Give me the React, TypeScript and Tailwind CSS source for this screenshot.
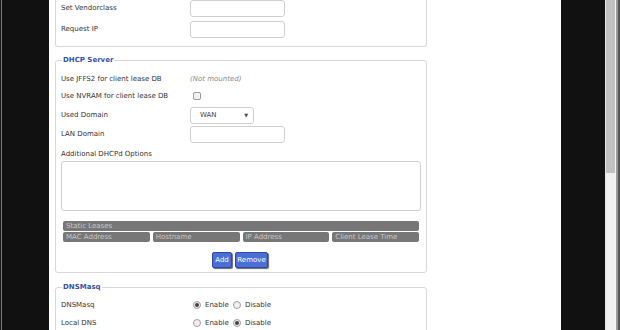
import React from "react";

const font = { fontFamily: '"DejaVu Sans", Verdana, sans-serif' };

function Row({ label, children, h }: { label: string; children?: React.ReactNode; h: string }) {
  return (
    <div className={`flex items-center ${h}`}>
      <div className="w-[129px] shrink-0 text-[#333]">{label}</div>
      <div className="flex items-center">{children}</div>
    </div>
  );
}

function Input() {
  return <div className="h-[17px] w-[95px] rounded-[3px] border border-[#cfcfcf] bg-white" />;
}

function Radio({ on }: { on?: boolean }) {
  return (
    <span className="flex h-[8px] w-[8px] shrink-0 items-center justify-center rounded-full border border-[#a0a0a0] bg-[#f0f0f0]">
      {on && <span className="h-[4px] w-[4px] rounded-full bg-[#444]" />}
    </span>
  );
}

function RadioPair({ first }: { first: boolean }) {
  return (
    <div className="flex items-center pl-[3px] text-[#333]">
      <Radio on={first} />
      <span className="ml-[4px] w-[28px]">Enable</span>
      <Radio on={!first} />
      <span className="ml-[4px]">Disable</span>
    </div>
  );
}

export default function App() {
  return (
    <div className="flex h-[330px] w-[620px] overflow-hidden bg-white text-[7px] leading-none" style={font}>
      <div className="flex h-full w-[49px] shrink-0 bg-[#111]">
        <div className="w-[1px] bg-[#1a1a1a]" />
        <div className="w-[1px] bg-[#7a7a7a]" />
      </div>
      <div className="h-full w-[512px] shrink-0 pl-[6px]">
        {/* first box, top cut off */}
        <div className="w-[372px] rounded-b-[3px] border-x border-b border-[#d8d8d8] px-[5px] pb-[8px]">
          <Row label="Set Vendorclass" h="h-[17px]">
            <Input />
          </Row>
          <div className="h-[4px]" />
          <Row label="Request IP" h="h-[17px]">
            <Input />
          </Row>
        </div>

        <fieldset className="mt-[10px] w-[372px] rounded-[3px] border border-[#d8d8d8] px-[5px] pb-[4px]">
          <legend className="ml-[1px] px-[1px] font-bold text-[#3550a8]">DHCP Server</legend>
          <div className="h-[7px]" />
          <Row label="Use JFFS2 for client lease DB" h="h-[16px]">
            <span className="italic text-[#888]">(Not mounted)</span>
          </Row>
          <Row label="Use NVRAM for client lease DB" h="h-[18px]">
            <span className="ml-[3px] h-[8px] w-[8px] rounded-[2px] border border-[#999] bg-[#f3f3f3]" />
          </Row>
          <div className="h-[2px]" />
          <Row label="Used Domain" h="h-[17px]">
            <div className="flex h-[17px] w-[64px] items-center justify-between rounded-[3px] border border-[#cfcfcf] bg-white pl-[9px] pr-[5px] text-[#444]">
              <span>WAN</span>
              <span className="text-[5px]">▼</span>
            </div>
          </Row>
          <div className="h-[2px]" />
          <Row label="LAN Domain" h="h-[17px]">
            <Input />
          </Row>
          <div className="flex h-[18px] items-center pt-[4px] text-[#333]">Additional DHCPd Options</div>
          <div className="h-[50px] w-[360px] rounded-[3px] border border-[#cfcfcf] bg-white" />
          <div className="ml-[2px] mt-[10px] w-[356px]">
            <div className="flex h-[10px] items-center rounded-[2px] bg-[#777] pl-[3px] text-[#c8c8c8]">Static Leases</div>
            <div className="mt-[1px] grid grid-cols-4 gap-[3px]">
              {["MAC Address", "Hostname", "IP Address", "Client Lease Time"].map((t) => (
                <div key={t} className="flex h-[10px] items-center rounded-[2px] bg-[#777] pl-[3px] text-[#c8c8c8]">
                  {t}
                </div>
              ))}
            </div>
          </div>
          <div className="mt-[10px] flex justify-center gap-[3px] pr-[2px]">
            <div className="flex h-[16px] w-[20px] items-center justify-center rounded-[2px] border border-[#2e4aa8] bg-[#4a6fd6] text-white shadow-[1px_1px_1px_#666]">Add</div>
            <div className="flex h-[16px] w-[33px] items-center justify-center rounded-[2px] border border-[#2e4aa8] bg-[#4a6fd6] text-white shadow-[1px_1px_1px_#666]">Remove</div>
          </div>
        </fieldset>

        <fieldset className="mt-[11px] w-[372px] rounded-[3px] border border-[#d8d8d8] px-[5px] pb-[10px]">
          <legend className="ml-[1px] px-[1px] font-bold text-[#3550a8]">DNSMasq</legend>
          <div className="h-[5px]" />
          <Row label="DNSMasq" h="h-[18px]">
            <RadioPair first={true} />
          </Row>
          <Row label="Local DNS" h="h-[18px]">
            <RadioPair first={false} />
          </Row>
        </fieldset>
      </div>
      <div className="h-full w-[44px] shrink-0 bg-[#111]" />
      <div className="flex h-full w-[15px] shrink-0">
        <div className="w-[1px] bg-[#e6e6e6]" />
        <div className="flex w-[9px] flex-col bg-[#f0f0f0]">
          <div className="h-[173px] bg-[#c1c1c1]" />
        </div>
        <div className="w-[1px] bg-[#f5f5f5]" />
        <div className="w-[2px] bg-[#9a9a9a]" />
        <div className="w-[2px] bg-[#555]" />
      </div>
    </div>
  );
}
